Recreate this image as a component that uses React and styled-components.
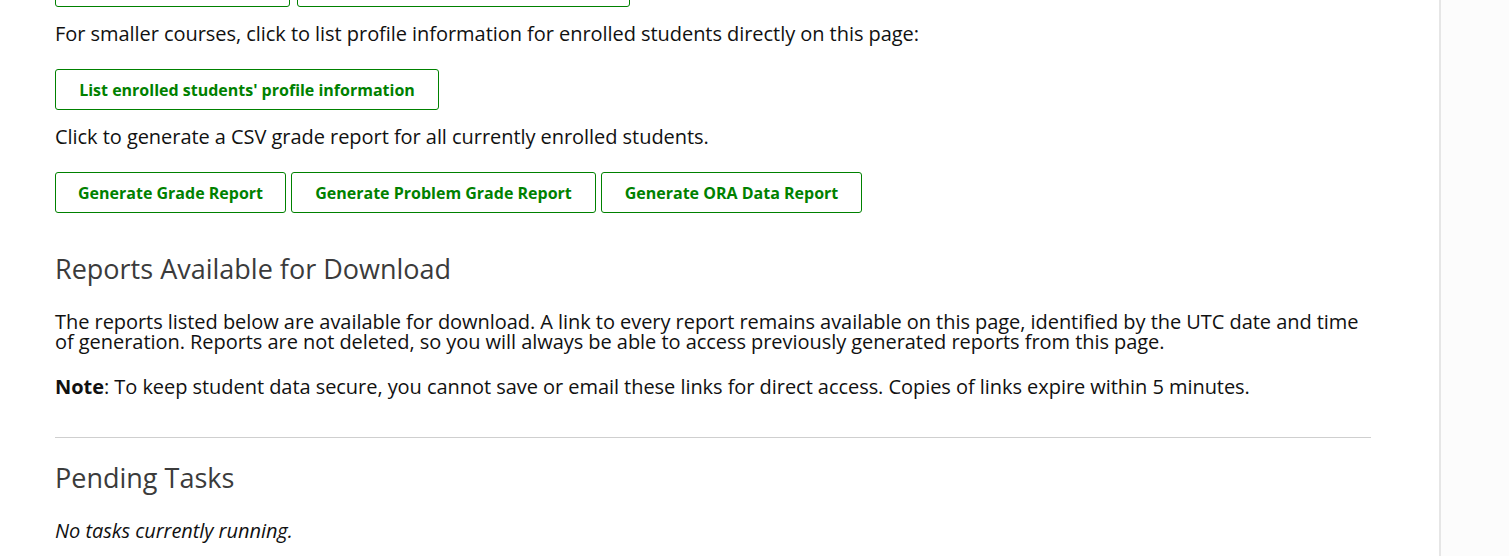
import React from "react";
import styled, { createGlobalStyle } from "styled-components";

const Global = createGlobalStyle`
  html, body { margin: 0; padding: 0; background: #fcfcfc; }
  body { font-family: "Open Sans", "Noto Sans", sans-serif; color: #111; overflow: hidden; }
`;

const Page = styled.div`
  display: flex;
  min-height: 556px;
`;

const Main = styled.main`
  width: 1441px;
  background: #fff;
  border-right: 2px solid #e6e6e6;
  box-sizing: border-box;
  padding: 0 0 0 55px;
`;

const Content = styled.div`
  width: 1316px;
`;

const ButtonRow = styled.div`
  display: flex;
  gap: ${(p) => p.$gap || 5}px;
  margin: ${(p) => p.$margin || "0"};
`;

const Button = styled.button`
  font-family: "Open Sans", "Noto Sans", sans-serif;
  font-size: 16px;
  font-weight: 700;
  line-height: 24px;
  color: #008100;
  background: #fff;
  border: 1px solid #008100;
  border-radius: 3px;
  padding: 8px 22px;
  height: 41px;
  box-sizing: border-box;
  cursor: pointer;
  white-space: nowrap;
  width: ${(p) => (p.$w ? `${p.$w}px` : "auto")};
`;

const Text = styled.p`
  font-size: 20px;
  letter-spacing: -0.05px;
  line-height: ${(p) => p.$lh || 30}px;
  margin: ${(p) => p.$margin || "0"};
  font-style: ${(p) => (p.$italic ? "italic" : "normal")};
`;

const Heading = styled.h2`
  font-size: 27px;
  font-weight: 400;
  line-height: 32px;
  color: #3b3b3b;
  margin: ${(p) => p.$margin || "0"};
`;

const Divider = styled.hr`
  border: none;
  border-top: 1px solid #cfcfcf;
  margin: 40px 0 0;
`;

export default function App() {
  return (
    <>
      <Global />
      <Page>
        <Main>
          <Content>
            <ButtonRow $margin="-34px 0 0" $gap={7}>
              <Button $w={235}>Download profile information</Button>
              <Button $w={333}>Download student anonymized IDs</Button>
            </ButtonRow>
            <Text $margin="12px 0 0">
              For smaller courses, click to list profile information for enrolled students directly on this page:
            </Text>
            <ButtonRow $margin="20px 0 0">
              <Button $w={384}>List enrolled students' profile information</Button>
            </ButtonRow>
            <Text $margin="12px 0 0">
              Click to generate a CSV grade report for all currently enrolled students.
            </Text>
            <ButtonRow $margin="20px 0 0">
              <Button $w={231}>Generate Grade Report</Button>
              <Button $w={305}>Generate Problem Grade Report</Button>
              <Button $w={261}>Generate ORA Data Report</Button>
            </ButtonRow>
            <Heading $margin="40px 0 0">Reports Available for Download</Heading>
            <Text $lh={20} $margin="27px 0 0">
              The reports listed below are available for download. A link to every report remains available on this page, identified by the UTC date and time of generation. Reports are not deleted, so you will always be able to access previously generated reports from this page.
            </Text>
            <Text $lh={20} $margin="25px 0 0">
              <strong>Note</strong>: To keep student data secure, you cannot save or email these links for direct access. Copies of links expire within 5 minutes.
            </Text>
            <Divider />
            <Heading $margin="24px 0 0">Pending Tasks</Heading>
            <Text $italic $margin="22px 0 0">No tasks currently running.</Text>
          </Content>
        </Main>
      </Page>
    </>
  );
}
